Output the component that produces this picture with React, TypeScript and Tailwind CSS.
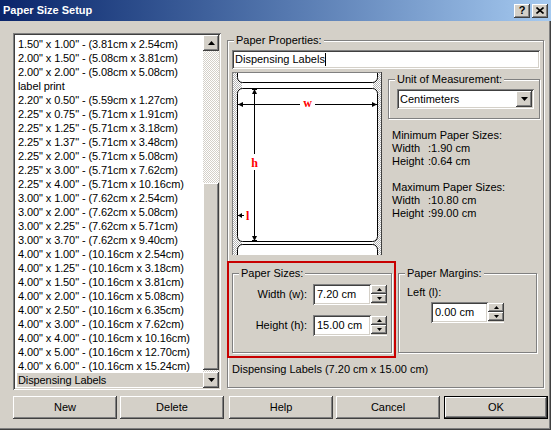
import React from 'react'

const raised =
  'bg-[#d4d0c8] shadow-[inset_-1px_-1px_0_#404040,inset_1px_1px_0_#ffffff,inset_-2px_-2px_0_#808080,inset_2px_2px_0_#d4d0c8]'
const sunken =
  'bg-white shadow-[inset_1px_1px_0_#808080,inset_-1px_-1px_0_#ffffff,inset_2px_2px_0_#404040,inset_-2px_-2px_0_#d4d0c8]'
const etched = 'relative border border-[#808080] shadow-[inset_1px_1px_0_#ffffff,1px_1px_0_#ffffff]'
const checker =
  'bg-[image:repeating-conic-gradient(#ffffff_0%_25%,#d4d0c8_0%_50%)] bg-[length:2px_2px]'

const sizes = [
  '1.50" x 1.00" - (3.81cm x 2.54cm)',
  '2.00" x 1.50" - (5.08cm x 3.81cm)',
  '2.00" x 2.00" - (5.08cm x 5.08cm)',
  'label print',
  '2.20" x 0.50" - (5.59cm x 1.27cm)',
  '2.25" x 0.75" - (5.71cm x 1.91cm)',
  '2.25" x 1.25" - (5.71cm x 3.18cm)',
  '2.25" x 1.37" - (5.71cm x 3.48cm)',
  '2.25" x 2.00" - (5.71cm x 5.08cm)',
  '2.25" x 3.00" - (5.71cm x 7.62cm)',
  '2.25" x 4.00" - (5.71cm x 10.16cm)',
  '3.00" x 1.00" - (7.62cm x 2.54cm)',
  '3.00" x 2.00" - (7.62cm x 5.08cm)',
  '3.00" x 2.25" - (7.62cm x 5.71cm)',
  '3.00" x 3.70" - (7.62cm x 9.40cm)',
  '4.00" x 1.00" - (10.16cm x 2.54cm)',
  '4.00" x 1.25" - (10.16cm x 3.18cm)',
  '4.00" x 1.50" - (10.16cm x 3.81cm)',
  '4.00" x 2.00" - (10.16cm x 5.08cm)',
  '4.00" x 2.50" - (10.16cm x 6.35cm)',
  '4.00" x 3.00" - (10.16cm x 7.62cm)',
  '4.00" x 4.00" - (10.16cm x 10.16cm)',
  '4.00" x 5.00" - (10.16cm x 12.70cm)',
  '4.00" x 6.00" - (10.16cm x 15.24cm)',
  'Dispensing Labels',
]

const Arrow = ({ dir, w = 7, h = 4 }: { dir: 'up' | 'down'; w?: number; h?: number }) => (
  <svg width={w} height={h} viewBox={`0 0 ${w} ${h}`} className="block">
    <polygon
      points={dir === 'up' ? `${w / 2},0 ${w},${h} 0,${h}` : `0,0 ${w},0 ${w / 2},${h}`}
      fill="#000"
    />
  </svg>
)

const Group = ({
  label,
  className,
  children,
}: {
  label: string
  className: string
  children?: React.ReactNode
}) => (
  <div className={`${etched} ${className}`}>
    <span className="absolute -top-[7px] left-[6px] px-[2px] bg-[#d4d0c8] leading-[13px] whitespace-nowrap">
      {label}
    </span>
    {children}
  </div>
)

const Spinner = () => (
  <div className="flex flex-col w-[16px] h-[21px] pt-[1px] border-b border-white">
    <div className={`${raised} h-[9px] flex items-center justify-center`}>
      <Arrow dir="up" w={5} h={3} />
    </div>
    <div className={`${raised} h-[9px] flex items-center justify-center`}>
      <Arrow dir="down" w={5} h={3} />
    </div>
  </div>
)

const SpinField = ({ value, width }: { value: string; width: string }) => (
  <div className="flex">
    <div className={`${sunken} ${width} h-[21px] pl-[4px] flex items-center`}>{value}</div>
    <Spinner />
  </div>
)

const Button = ({ label, className = '' }: { label: string; className?: string }) => (
  <div className={`${raised} w-[104px] h-[23px] flex items-center justify-center ${className}`}>
    {label}
  </div>
)

function Preview() {
  const red = { fill: '#ff0000', fontFamily: "'Liberation Serif', serif", fontWeight: 700, fontSize: 12 }
  return (
    <svg width="150" height="183" viewBox="0 0 150 183" className="block shrink-0">
      <defs>
        <pattern id="dither" width="2" height="2" patternUnits="userSpaceOnUse">
          <rect width="2" height="2" fill="#ffffff" />
          <rect width="1" height="1" fill="#b4b4b4" />
          <rect x="1" y="1" width="1" height="1" fill="#b4b4b4" />
        </pattern>
      </defs>
      <rect width="150" height="183" fill="url(#dither)" />
      <rect x="10" y="11" width="131" height="5" fill="#fff" />
      <rect x="10" y="170" width="131" height="2" fill="#fff" />
      <rect x="5.5" y="-10.5" width="140" height="21" rx="5" fill="#fff" stroke="#000" />
      <rect x="5.5" y="16.5" width="140" height="153" rx="5" fill="#fff" stroke="#000" />
      <rect x="5.5" y="172.5" width="140" height="30" rx="5" fill="#fff" stroke="#000" />
      <line x1="0.5" y1="0" x2="0.5" y2="183" stroke="#808080" />
      <line x1="0" y1="0.5" x2="150" y2="0.5" stroke="#808080" />
      <line x1="149.5" y1="0" x2="149.5" y2="183" stroke="#404040" />

      {/* height */}
      <line x1="22.5" y1="17" x2="22.5" y2="82" stroke="#000" />
      <line x1="22.5" y1="98" x2="22.5" y2="169" stroke="#000" />
      <polygon points="22.5,17 20,22 25,22" fill="#000" />
      <polygon points="22.5,169 20,164 25,164" fill="#000" />
      <line x1="20" y1="17.5" x2="25" y2="17.5" stroke="#000" />
      <line x1="20" y1="168.5" x2="25" y2="168.5" stroke="#000" />
      <text x="22.5" y="95" textAnchor="middle" style={red}>h</text>

      {/* width */}
      <line x1="6" y1="32.5" x2="68" y2="32.5" stroke="#000" />
      <line x1="83" y1="32.5" x2="145" y2="32.5" stroke="#000" />
      <polygon points="6,32.5 11,30 11,35" fill="#000" />
      <polygon points="145,32.5 140,30 140,35" fill="#000" />
      <text x="75.5" y="35" textAnchor="middle" style={red}>w</text>

      {/* left margin */}
      <line x1="6" y1="143.5" x2="12" y2="143.5" stroke="#000" />
      <polygon points="6,143.5 10,141 10,146" fill="#000" />
      <text x="14" y="148" style={red}>l</text>
    </svg>
  )
}

export default function App() {
  return (
    <div className="w-[551px] h-[430px] bg-[#d4d0c8] flex flex-col overflow-hidden text-[11px] text-black font-['Liberation_Sans',Arial,sans-serif] shadow-[inset_-1px_-1px_0_#404040,inset_-2px_-2px_0_#808080]">
      {/* title bar */}
      <div className="h-[21px] shrink-0 flex items-center pl-[3px] pr-[3px] bg-linear-to-r from-[#0a246a] to-[#a6caf0]">
        <span className="text-white font-bold text-[11px]">Paper Size Setup</span>
        <div className="ml-auto flex gap-[2px]">
          <div className={`${raised} w-[16px] h-[14px] flex items-center justify-center font-bold text-[11px] leading-none`}>
            ?
          </div>
          <div className={`${raised} w-[16px] h-[14px] flex items-center justify-center`}>
            <svg width="8" height="7" viewBox="0 0 8 7">
              <path d="M0.5 0.5 L7.5 6.5 M7.5 0.5 L0.5 6.5" stroke="#000" strokeWidth="1.6" />
            </svg>
          </div>
        </div>
      </div>

      <div className="flex pt-[12px] pl-[13px]">
        {/* list of sizes */}
        <div className={`${sunken} w-[208px] h-[357px] p-[2px] flex shrink-0`}>
          <div className="flex-1 overflow-hidden pt-[2px] pl-[2px] tracking-[-0.1px]">
            {sizes.map((s) => (
              <div
                key={s}
                className={`h-[14px] leading-[14px] pl-[1px] whitespace-pre ${
                  s === 'Dispensing Labels' ? 'bg-[#d4d0c8]' : ''
                }`}
              >
                {s}
              </div>
            ))}
          </div>
          <div className="w-[16px] flex flex-col">
            <div className={`${raised} h-[16px] flex items-center justify-center`}>
              <Arrow dir="up" />
            </div>
            <div className={`flex-1 ${checker}`}>
              <div className={`${raised} mt-[132px] h-[187px]`} />
            </div>
            <div className={`${raised} h-[16px] flex items-center justify-center`}>
              <Arrow dir="down" />
            </div>
          </div>
        </div>

        {/* paper properties */}
        <Group label="Paper Properties:" className="ml-[6px] mt-[7px] w-[317px] h-[348px]">
          <div className={`${sunken} mt-[9px] ml-[4px] w-[308px] h-[19px] pl-[3px] flex items-center`}>
            Dispensing Labels
            <span className="w-px h-[13px] bg-black" />
          </div>

          <div className="flex mt-[3px] ml-[4px]">
            <Preview />
            <div className="ml-[6px]">
              <Group label="Unit of Measurement:" className="mt-[7px] w-[152px] h-[40px]">
                <div className={`${sunken} ml-[8px] mt-[9px] w-[137px] h-[20px] p-[2px] flex`}>
                  <span className="flex-1 pl-[1px] leading-[16px]">Centimeters</span>
                  <div className={`${raised} w-[16px] h-[16px] flex items-center justify-center`}>
                    <Arrow dir="down" />
                  </div>
                </div>
              </Group>
              <div className="mt-[10px] ml-[4px] leading-[13px]">
                <div>Minimum Paper Sizes:</div>
                <div>
                  <span className="inline-block w-[36px]">Width</span>:1.90 cm
                </div>
                <div>
                  <span className="inline-block w-[36px]">Height</span>:0.64 cm
                </div>
                <div className="h-[13px]" />
                <div>Maximum Paper Sizes:</div>
                <div>
                  <span className="inline-block w-[36px]">Width</span>:10.80 cm
                </div>
                <div>
                  <span className="inline-block w-[36px]">Height</span>:99.00 cm
                </div>
              </div>
            </div>
          </div>

          <div className="flex mt-[18px] ml-[4px]">
            <Group label="Paper Sizes:" className="w-[160px] h-[80px]">
              <div className="absolute -left-[6px] -top-[13px] -right-[5px] -bottom-[6px] border-2 border-[#c80000]" />
              <div className="flex items-center mt-[10px]">
                <span className="w-[74px] text-right">Width (w):</span>
                <div className="ml-[6px]">
                  <SpinField value="7.20 cm" width="w-[58px]" />
                </div>
              </div>
              <div className="flex items-center mt-[10px]">
                <span className="w-[74px] text-right">Height (h):</span>
                <div className="ml-[6px]">
                  <SpinField value="15.00 cm" width="w-[58px]" />
                </div>
              </div>
            </Group>
            <Group label="Paper Margins:" className="ml-[6px] w-[139px] h-[80px]">
              <div className="mt-[12px] ml-[8px] leading-[13px]">Left (l):</div>
              <div className="mt-[3px] ml-[32px]">
                <SpinField value="0.00 cm" width="w-[57px]" />
              </div>
            </Group>
          </div>

          <div className="mt-[10px] ml-[4px] leading-[13px]">Dispensing Labels (7.20 cm x 15.00 cm)</div>
        </Group>
      </div>

      {/* buttons */}
      <div className="flex mt-[6px] pl-[13px]">
        <Button label="New" />
        <Button label="Delete" className="ml-[3px]" />
        <Button label="Help" className="ml-[5px]" />
        <Button label="Cancel" className="ml-[3px]" />
        <Button label="OK" className="ml-[4px] border border-black" />
      </div>
    </div>
  )
}
